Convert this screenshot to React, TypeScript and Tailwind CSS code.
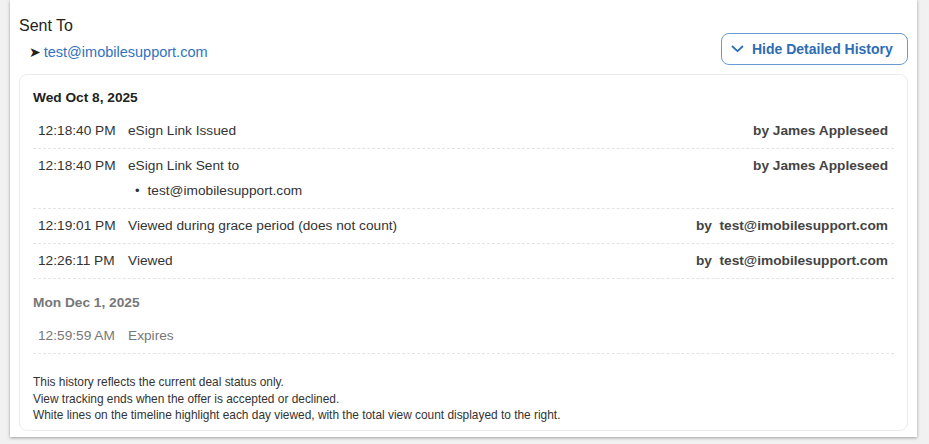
import React from "react";

type Entry = {
    time: string;
    event: string;
    by?: string;
    sub?: string;
    muted?: boolean;
};

const days: { date: string; muted?: boolean; entries: Entry[] }[] = [
    {
        date: "Wed Oct 8, 2025",
        entries: [
            { time: "12:18:40 PM", event: "eSign Link Issued", by: "James Appleseed" },
            { time: "12:18:40 PM", event: "eSign Link Sent to", by: "James Appleseed", sub: "test@imobilesupport.com" },
            { time: "12:19:01 PM", event: "Viewed during grace period (does not count)", by: "\u00a0test@imobilesupport.com" },
            { time: "12:26:11 PM", event: "Viewed", by: "\u00a0test@imobilesupport.com" },
        ],
    },
    {
        date: "Mon Dec 1, 2025",
        muted: true,
        entries: [{ time: "12:59:59 AM", event: "Expires", muted: true }],
    },
];

const HistoryRow = ({ entry }: { entry: Entry }) => {
    return (
        <div className={`flex pl-[5px] pr-[6px] py-[7px] leading-5 border-b border-dashed border-[#e4e4e4] ${entry.muted ? "text-[#777]" : "text-[#333]"}`}>
            <div className="w-[90px] shrink-0">{entry.time}</div>
            <div className="flex-1">
                <div>{entry.event}</div>
                {entry.sub ? (
                    <div className="mt-[5px] pl-[7px] flex items-center gap-[8px]">
                        <span className="text-[13px]">•</span>
                        <span>{entry.sub}</span>
                    </div>
                ) : null}
            </div>
            {entry.by ? <div className="font-bold text-[#444] whitespace-pre">by {entry.by}</div> : null}
        </div>
    );
};

const App = () => {
    return (
        <div className="w-[929px] h-[444px] bg-[#f1f1f1] overflow-hidden" style={{ fontFamily: '"Liberation Sans", Arial, sans-serif' }}>
            <div className="ml-[10px] w-[907px] h-[437px] bg-white px-[9px] pt-[16px] shadow-[0_1px_3px_rgba(0,0,0,0.35)]">
                <div className="flex items-start justify-between">
                    <div>
                        <div className="text-[16px] leading-5 text-[#222]">Sent To</div>
                        <div className="mt-[6px] flex items-center gap-[3px] pl-[10px] leading-5">
                            <span className="text-[14px] text-[#222]" style={{ fontFamily: '"DejaVu Sans", sans-serif' }}>➤</span>
                            <span className="text-[14.5px] text-[#2f72c0]">test@imobilesupport.com</span>
                        </div>
                    </div>
                    <button className="mt-[17px] h-[32px] w-[187px] rounded-[8px] border border-[#6a9ad2] flex items-center pl-[9px] gap-[8px] text-[14px] font-bold text-[#2e6cb3]">
                        <svg width="13" height="8" viewBox="0 0 13 8" fill="none">
                            <polyline points="1.5,1.5 6.5,6.2 11.5,1.5" stroke="#2e6cb3" strokeWidth="1.8" strokeLinecap="round" strokeLinejoin="round" />
                        </svg>
                        Hide Detailed History
                    </button>
                </div>

                <div className="mt-[9px] rounded-[8px] border border-[#ececec] px-[13px] pt-[13px] pb-[6px] text-[13.7px]">
                    {days.map((day, i) => (
                        <div key={day.date} className={i > 0 ? "mt-[14px]" : ""}>
                            <div className={`font-bold leading-5 mb-[6px] ${day.muted ? "text-[#777]" : "text-[#222]"}`}>{day.date}</div>
                            {day.entries.map((entry, j) => (
                                <HistoryRow key={j} entry={entry} />
                            ))}
                        </div>
                    ))}
                    <div className="mt-[20px] text-[11.9px] leading-[16.5px] text-[#333]">
                        <div>This history reflects the current deal status only.</div>
                        <div>View tracking ends when the offer is accepted or declined.</div>
                        <div>White lines on the timeline highlight each day viewed, with the total view count displayed to the right.</div>
                    </div>
                </div>
            </div>
        </div>
    );
};

export default App;
